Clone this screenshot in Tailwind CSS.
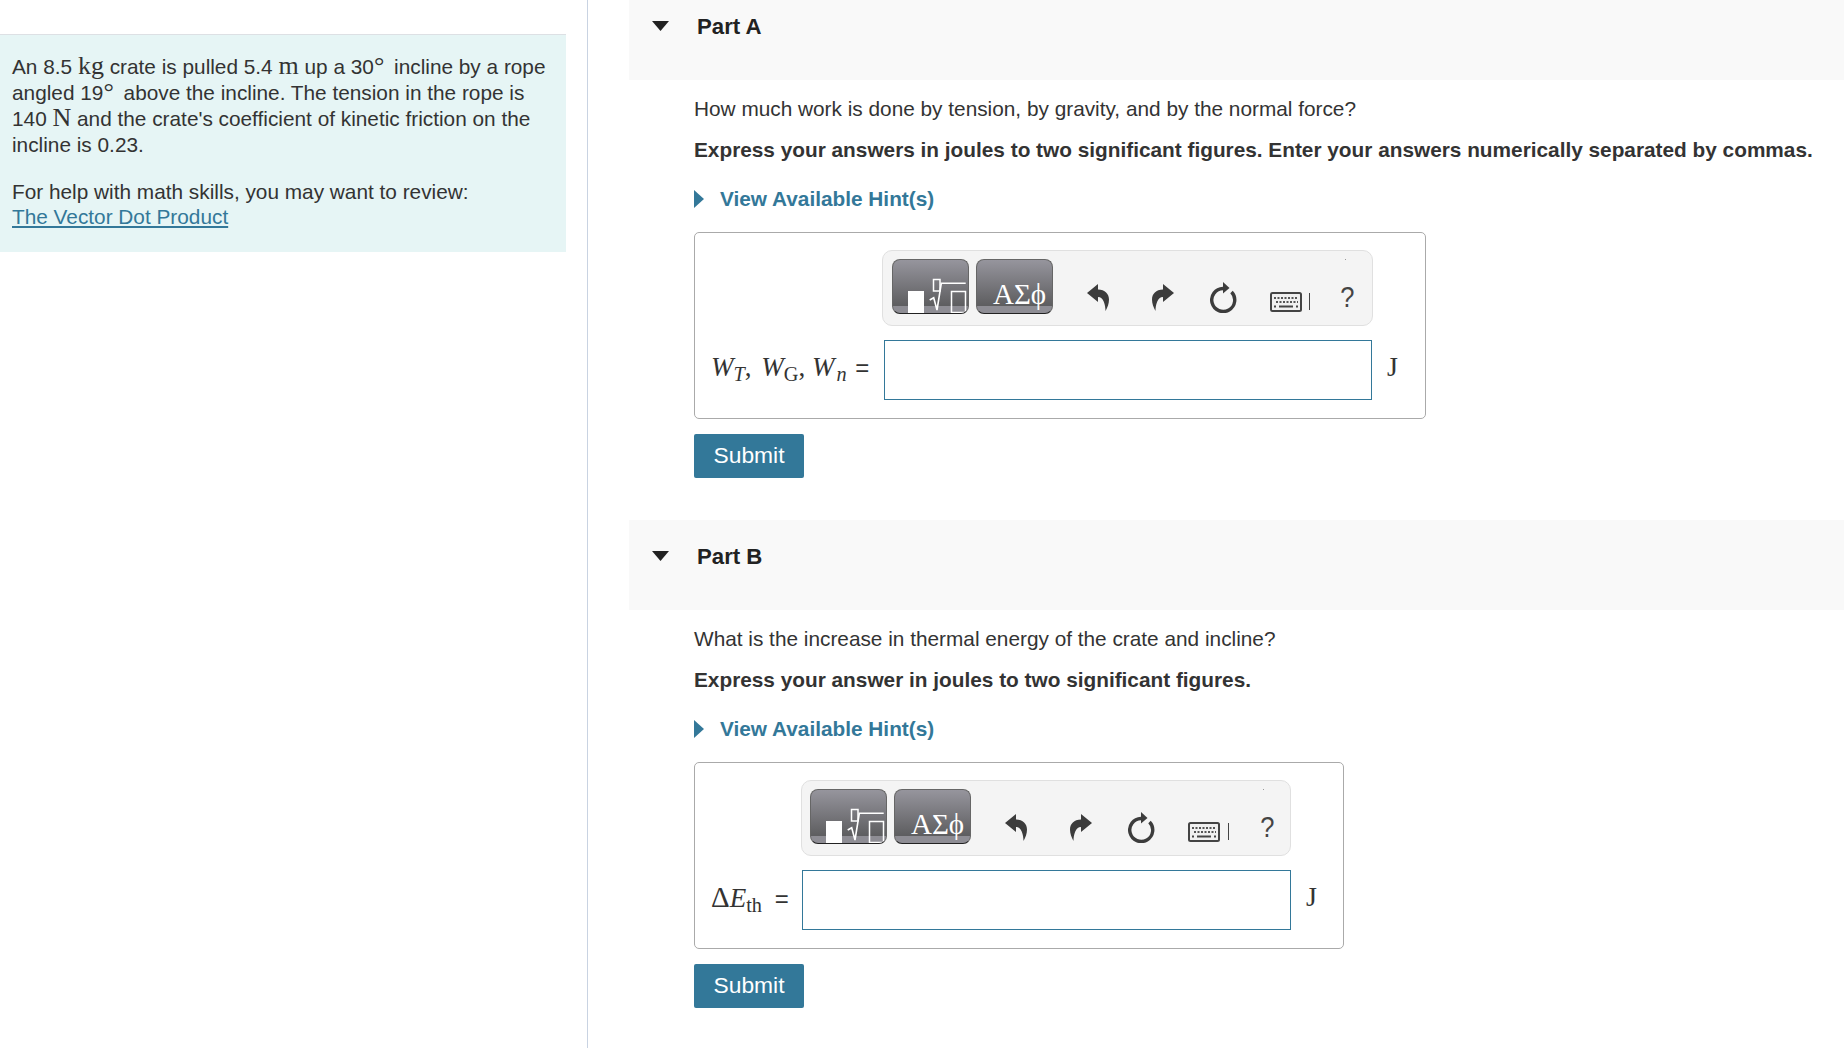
<!DOCTYPE html>
<html lang="en">
  <head>
    <meta charset="UTF-8" />
    <meta name="viewport" content="width=device-width, initial-scale=1.0" />
    <script src="https://cdn.jsdelivr.net/npm/@tailwindcss/browser@4"></script>
    <title>Part A and Part B</title>
  </head>

  <body class="bg-white text-[#333] text-[20.8px] leading-[26px] font-['Liberation_Sans',sans-serif] overflow-hidden">
    <!-- shared toolbar icons -->
    <svg class="absolute w-0 h-0">
      <symbol id="templates" viewBox="0 0 75 53">
        <rect x="15" y="31" width="16" height="22" fill="#fff" />
        <rect x="40.5" y="19.5" width="6.5" height="11.5" fill="none" stroke="#fff" stroke-width="1.5" />
        <path d="M36.7 40 L40.7 37.7 L44 50 L48.3 23.3 H72.7" fill="none" stroke="#fff" stroke-width="1.6" />
        <rect x="58.5" y="31.5" width="14" height="21" fill="none" stroke="#fff" stroke-width="1.5" />
      </symbol>
      <symbol id="undo" viewBox="0 0 22 27">
        <path d="M0 9 L11 0 V5.5 C18 5.5 22 10 22 15.5 C22 19.5 20.5 23.5 18.5 27 C18.5 21 16.5 13 11 13 V18 Z" fill="#3c3c3c" />
      </symbol>
      <symbol id="reset" viewBox="0 0 27 31">
        <path d="M13 6.5 A11.5 11.5 0 1 0 21.5 10" fill="none" stroke="#3c3c3c" stroke-width="3.4" />
        <path d="M13 0 L19.5 6 L13 11.5 Z" fill="#3c3c3c" />
      </symbol>
      <symbol id="keyboard" viewBox="0 0 32 20">
        <rect x="1" y="1" width="30" height="18" rx="1.5" fill="#f0f0f0" stroke="#444" stroke-width="2" />
        <path d="M4 6 H28" stroke="#555" stroke-width="2" stroke-dasharray="2 1.5" />
        <path d="M6 10 H28" stroke="#555" stroke-width="2" stroke-dasharray="2 1.5" />
        <path d="M4 14.5 H6 M9 14.5 H23 M26 14.5 H28" stroke="#444" stroke-width="2" />
      </symbol>
    </svg>

    <div class="flex h-[1048px]">
      <!-- left column -->
      <div class="w-[588px] shrink-0 border-r border-[#c9d3e2] pt-[34px]">
        <div class="w-[566px] h-[218px] bg-[#e6f5f5] border-t border-[#dde0e4] pl-3 pr-2 pt-[19px]">
          <p>
            An 8.5 <span class="font-['Liberation_Serif',serif] text-[26px] leading-[0]">kg</span> crate is pulled 5.4
            <span class="font-['Liberation_Serif',serif] text-[26px] leading-[0]">m</span> up a 30<span class="font-['Liberation_Serif',serif] text-[26px] leading-[0] mr-[4px]">°</span> incline by a rope
            angled 19<span class="font-['Liberation_Serif',serif] text-[26px] leading-[0] mr-[4px]">°</span> above the incline. The tension in the rope is
            140 <span class="font-['Liberation_Serif',serif] text-[26px] leading-[0]">N</span> and the crate's coefficient of kinetic friction on the
            incline is 0.23.
          </p>
          <p class="mt-[21px]">For help with math skills, you may want to review:</p>
          <a href="#" class="block w-fit text-[#337899] underline -mt-[1px]">The Vector Dot Product</a>
        </div>
      </div>

      <!-- right column -->
      <div class="flex-1 pl-[41px]">
        <!-- Part A -->
        <div class="h-[80px] bg-[#f9f9f9] flex items-start pt-[14px]">
          <svg class="w-[17px] h-[10px] ml-[23px] mt-[7px]" viewBox="0 0 17 10"><path d="M0 0 H17 L8.5 10 Z" fill="#222" /></svg>
          <h2 class="ml-[28px] text-[22.2px] font-bold text-[#222]">Part A</h2>
        </div>
        <div class="pl-[65px]">
          <p class="mt-[16px]">How much work is done by tension, by gravity, and by the normal force?</p>
          <p class="mt-[15px] font-bold">Express your answers in joules to two significant figures. Enter your answers numerically separated by commas.</p>
          <div class="mt-[23px] flex items-center font-bold text-[#337899]">
            <svg class="w-[10px] h-[18px]" viewBox="0 0 10 18"><path d="M0 0 L10 9 L0 18 Z" fill="#337899" /></svg>
            <span class="ml-[16px]">View Available Hint(s)</span>
          </div>

          <div class="mt-[20px] w-[732px] h-[187px] border border-[#aaa] rounded-[5px] pt-[17px]">
            <div class="relative ml-[187px] w-[491px] h-[76px] bg-[#f4f4f4] border border-[#e0e0e0] rounded-[10px] flex items-start pt-[8px] pl-[9px]">
              <button class="w-[77px] h-[55px] rounded-[8px] border border-[#666] border-b-[#222] bg-[linear-gradient(#96959d_0%,#5d5d5f_87%,#8e8d94_87%)] overflow-hidden">
                <svg class="w-full h-full"><use href="#templates" /></svg>
              </button>
              <button class="ml-[7px] w-[77px] h-[55px] rounded-[8px] border border-[#666] border-b-[#222] bg-[linear-gradient(#96959d_0%,#5d5d5f_87%,#8e8d94_87%)] pl-[16px] pt-[15px] text-white text-[29px] leading-[32px] font-['Liberation_Serif',serif] whitespace-nowrap text-left">ΑΣϕ</button>
              <svg class="ml-[34px] mt-[25px] w-[22px] h-[27px]"><use href="#undo" /></svg>
              <svg class="ml-[43px] mt-[25px] w-[22px] h-[27px] -scale-x-100"><use href="#undo" /></svg>
              <svg class="ml-[36px] mt-[23px] w-[27px] h-[31px]"><use href="#reset" /></svg>
              <svg class="ml-[33px] mt-[33px] w-[32px] h-[20px]"><use href="#keyboard" /></svg>
              <span class="ml-[7px] mt-[34px] w-[1px] h-[17px] bg-[#444]"></span>
              <span class="ml-[29px] mt-[21px] text-[#444] text-[30px] leading-[34px] scale-x-[0.85]">?</span>
              <span class="absolute right-[26px] top-[8px] w-[1px] h-[1px] bg-[#999]"></span>
            </div>
            <div class="mt-[14px] flex items-start">
              <div class="w-[189px] shrink-0 pl-[16px] pt-[12px] text-[27px] leading-[30px] font-['Liberation_Serif',serif] whitespace-nowrap"><i>W<sub><i>T</i></sub></i><span class="mr-[3px]">,</span>&nbsp;<i>W</i><sub>G</sub>,&nbsp;<i>W<sub class="pl-[2px]">n</sub></i> <span class="ml-[2px] text-[24px] font-['Liberation_Sans',sans-serif]">=</span></div>
              <input type="text" class="w-[488px] h-[60px] border border-[#337899] bg-white" />
              <span class="ml-[15px] pt-[12px] text-[28px] leading-[30px] font-['Liberation_Serif',serif]">J</span>
            </div>
          </div>

          <button class="mt-[15px] w-[110px] h-[44px] pb-[2px] bg-[#337899] text-white text-[22.8px] rounded-[2px] block">Submit</button>
        </div>

        <!-- Part B -->
        <div class="mt-[42px] h-[90px] bg-[#f9f9f9] flex items-start pt-[24px]">
          <svg class="w-[17px] h-[10px] ml-[23px] mt-[7px]" viewBox="0 0 17 10"><path d="M0 0 H17 L8.5 10 Z" fill="#222" /></svg>
          <h2 class="ml-[28px] text-[22.2px] font-bold text-[#222]">Part B</h2>
        </div>
        <div class="pl-[65px]">
          <p class="mt-[16px]">What is the increase in thermal energy of the crate and incline?</p>
          <p class="mt-[15px] font-bold">Express your answer in joules to two significant figures.</p>
          <div class="mt-[23px] flex items-center font-bold text-[#337899]">
            <svg class="w-[10px] h-[18px]" viewBox="0 0 10 18"><path d="M0 0 L10 9 L0 18 Z" fill="#337899" /></svg>
            <span class="ml-[16px]">View Available Hint(s)</span>
          </div>

          <div class="mt-[20px] w-[650px] h-[187px] border border-[#aaa] rounded-[5px] pt-[17px]">
            <div class="relative ml-[106px] w-[490px] h-[76px] bg-[#f4f4f4] border border-[#e0e0e0] rounded-[10px] flex items-start pt-[8px] pl-[8px]">
              <button class="w-[77px] h-[55px] rounded-[8px] border border-[#666] border-b-[#222] bg-[linear-gradient(#96959d_0%,#5d5d5f_87%,#8e8d94_87%)] overflow-hidden">
                <svg class="w-full h-full"><use href="#templates" /></svg>
              </button>
              <button class="ml-[7px] w-[77px] h-[55px] rounded-[8px] border border-[#666] border-b-[#222] bg-[linear-gradient(#96959d_0%,#5d5d5f_87%,#8e8d94_87%)] pl-[16px] pt-[15px] text-white text-[29px] leading-[32px] font-['Liberation_Serif',serif] whitespace-nowrap text-left">ΑΣϕ</button>
              <svg class="ml-[34px] mt-[25px] w-[22px] h-[27px]"><use href="#undo" /></svg>
              <svg class="ml-[43px] mt-[25px] w-[22px] h-[27px] -scale-x-100"><use href="#undo" /></svg>
              <svg class="ml-[36px] mt-[23px] w-[27px] h-[31px]"><use href="#reset" /></svg>
              <svg class="ml-[33px] mt-[33px] w-[32px] h-[20px]"><use href="#keyboard" /></svg>
              <span class="ml-[8px] mt-[34px] w-[1px] h-[17px] bg-[#444]"></span>
              <span class="ml-[30px] mt-[21px] text-[#444] text-[30px] leading-[34px] scale-x-[0.85]">?</span>
              <span class="absolute right-[26px] top-[8px] w-[1px] h-[1px] bg-[#999]"></span>
            </div>
            <div class="mt-[14px] flex items-start">
              <div class="w-[107px] shrink-0 pl-[16px] pt-[12px] text-[27px] leading-[30px] font-['Liberation_Serif',serif] whitespace-nowrap"><span class="text-[29px]">Δ</span><i>E</i><sub>th</sub> <span class="ml-[6px] text-[24px] font-['Liberation_Sans',sans-serif]">=</span></div>
              <input type="text" class="w-[489px] h-[60px] border border-[#337899] bg-white" />
              <span class="ml-[15px] pt-[12px] text-[28px] leading-[30px] font-['Liberation_Serif',serif]">J</span>
            </div>
          </div>

          <button class="mt-[15px] w-[110px] h-[44px] pb-[2px] bg-[#337899] text-white text-[22.8px] rounded-[2px] block">Submit</button>
        </div>
      </div>
    </div>
  </body>
</html>
